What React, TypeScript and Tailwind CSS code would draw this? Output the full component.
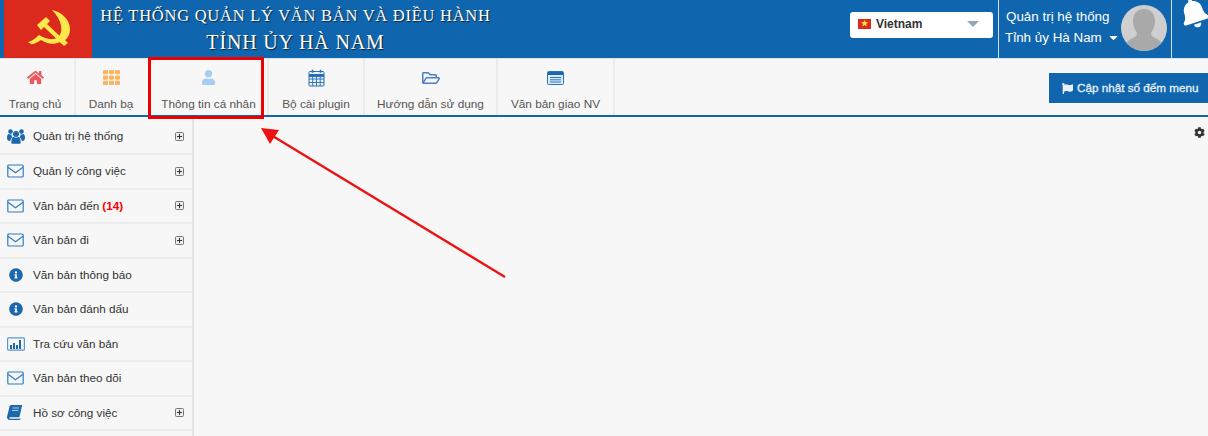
import { FaBell, FaCaretDown, FaCog, FaFlag, FaHome, FaInfoCircle, FaRegFolderOpen, FaTh, FaUser } from 'react-icons/fa';
import type { ReactNode } from 'react';

const Mail = () => (
  <svg width="17" height="14" viewBox="0 0 17 14" fill="none" stroke="#2f7cc4" strokeWidth="1.2">
    <rect x="0.8" y="1" width="15.4" height="12" rx="1" />
    <path d="M1 3.2 8.5 8.8 16 3.2" />
  </svg>
);

const Users = () => (
  <svg width="18" height="15" viewBox="0 0 18 15" fill="#1c68ad">
    <circle cx="9" cy="5" r="3" />
    <circle cx="3.5" cy="2.6" r="2.3" />
    <circle cx="14.5" cy="2.6" r="2.3" />
    <path d="M4.5 14.8c-.5-5 1-6.8 2.5-6.8 1 .9 3 .9 4 0 1.500 0 3 1.800 2.500 6.800z" />
    <path d="M0 9c0-2.500.8-4 2-4 .9.700 1.800.700 2.500.5-.1 1.200.3 2.200 1 3-1.200.6-2 1.700-2.200 3.500C1 12 0 11 0 9zM18 9c0-2.500-.8-4-2-4-.9.700-1.800.700-2.500.5.100 1.200-.3 2.200-1 3 1.200.6 2 1.700 2.200 3.500C17 12 18 11 18 9z" />
  </svg>
);

const Book = () => (
  <svg width="15" height="15" viewBox="0 0 15 15" fill="#1c68ad">
    <path d="M4 0h10.500c.5 0 .6.400.5.800l-2.400 10.700c-.1.400-.4.700-.8.700H3c-1 0-1 1.500 0 1.500h9.500l1.200-.6-.6 1.500-.6.400H2.500C.8 14.500-.3 13.200.1 11.500L2.600 1.200C2.800.400 3.300 0 4 0z" />
    <path d="M5.500 3h6.500M5 5.500h6.500" stroke="#dceaf7" strokeWidth="0.8" />
  </svg>
);

const Chart = () => (
  <svg width="18" height="14" viewBox="0 0 18 14">
    <rect x="0.6" y="0.8" width="16.8" height="12.4" rx="1" fill="none" stroke="#5a96d2" strokeWidth="1.2" />
    <path d="M3 8h2v4H3zM6 6h2v6H6zM9 8h2v4H9zM12 3h2v9h-2z" fill="#1c68ad" />
  </svg>
);

const Calendar = () => (
  <svg width="17" height="18" viewBox="0 0 17 18" fill="none" stroke="#2a6fb5">
    <rect x="1" y="2.5" width="15" height="14.5" rx="1" fill="#e8f0f8" />
    <path d="M1 6.500h15" strokeWidth="3" />
    <path d="M1 10h15M1 13.500h15M4.700 8v9M8.500 8v9M12.200 8v9" strokeWidth="0.9" />
    <path d="M4.500 0.800v3M12.500 0.800v3" strokeWidth="1.6" />
  </svg>
);

const Panel = () => (
  <svg width="17" height="14" viewBox="0 0 17 14">
    <rect x="0.5" y="0.5" width="16" height="13" rx="1" fill="#dceaf7" stroke="#2a76bd" />
    <path d="M1 1h15v3H1z" fill="#1c68ad" />
    <path d="M3 6.500h11M3 8.800h11M3 11h11" stroke="#2a76bd" strokeWidth="1" />
  </svg>
);

const Plus = () => (
  <svg width="9" height="9" viewBox="0 0 9 9" fill="none" strokeWidth="1">
    <rect x="0.5" y="0.5" width="8" height="8" rx="1" fill="#ececec" stroke="#777" />
    <path d="M2 4.500h5M4.500 2v5" stroke="#333" />
  </svg>
);

const tabs: { label: string; icon: ReactNode; box: string }[] = [
  { label: 'Trang chủ', icon: <FaHome size={17} color="#f0565e" />, box: 'w-[76px] pr-[4px]' },
  { label: 'Danh bạ', icon: <FaTh size={17} color="#fdb45c" />, box: 'w-[74px] pr-[2px]' },
  { label: 'Thông tin cá nhân', icon: <FaUser size={15} color="#a8cdf5" />, box: 'w-[119px]' },
  { label: 'Bộ cài plugin', icon: <Calendar />, box: 'w-[96px]' },
  { label: 'Hướng dẫn sử dụng', icon: <FaRegFolderOpen size={18} color="#4d7fc7" />, box: 'w-[133px]' },
  { label: 'Văn bản giao NV', icon: <Panel />, box: 'w-[117px]' },
];

const infoIcon = <FaInfoCircle size={14} color="#1c68ad" className="ml-[2px]" />;

const menu: { label: string; icon: ReactNode; count?: string; plus?: boolean }[] = [
  { label: 'Quản trị hệ thống', icon: <Users />, plus: true },
  { label: 'Quản lý công việc', icon: <Mail />, plus: true },
  { label: 'Văn bản đến', icon: <Mail />, count: '(14)', plus: true },
  { label: 'Văn bản đi', icon: <Mail />, plus: true },
  { label: 'Văn bản thông báo', icon: infoIcon },
  { label: 'Văn bản đánh dấu', icon: infoIcon },
  { label: 'Tra cứu văn bản', icon: <Chart /> },
  { label: 'Văn bản theo dõi', icon: <Mail /> },
  { label: 'Hồ sơ công việc', icon: <Book />, plus: true },
];

export default function App() {
  return (
    <div className="relative h-[436px] w-[1208px] overflow-hidden bg-[#f7f7f7] font-['Liberation_Sans',Arial,sans-serif] text-[12px] text-[#333]">
      {/* Header */}
      <header className="flex h-[58px] bg-[#1066ae]">
        <div className="ml-1 h-[58px] w-[88px] bg-[#dc291e]">
          <svg width="88" height="58" viewBox="4 0 88 58" fill="#fde84c">
            <path d="M52 10C62 12 70 20 70 29C70 34 68 38 65 40L68 43L64 46L60 42C54 45 47 44 41 40C38 42 33 45 31 44L28 42C32 41 36 38 39 35C46 39 53 41 58 37C64 32 62 20 52 10Z" />
            <path d="M37 25L46 17L50 21L47 24L65 41L62 44L44 27L41 30Z" />
          </svg>
        </div>
        <div className="ml-2 w-[391px] pt-[6px] text-center font-['Liberation_Serif',serif] text-white [text-shadow:1px_1px_1px_#123]">
          <div className="text-[16.5px] leading-[20px] tracking-[0.74px] whitespace-nowrap">HỆ THỐNG QUẢN LÝ VĂN BẢN VÀ ĐIỀU HÀNH</div>
          <div className="mt-[5px] text-[20px] leading-[22px] tracking-[0.85px] whitespace-nowrap">TỈNH ỦY HÀ NAM</div>
        </div>
        <div className="ml-[359px] mt-[12px] flex h-[26px] w-[143px] items-center rounded-[3px] bg-white pb-[2px] pl-[8px] pr-[14px] text-[12px] font-bold text-[#333]">
          <span className="flex h-[10px] w-[13px] items-center justify-center bg-[#da2a1c] text-[8px] leading-none text-[#fde84c]">★</span>
          <span className="ml-[5px] flex-1">Vietnam</span>
          <span className="h-0 w-0 border-x-[6px] border-t-[6px] border-x-transparent border-t-[#8fa8bd]" />
        </div>
        <div className="ml-[5px] flex w-[174px] border-x border-[#cfe0ef] pl-[7px]">
          <div className="w-[115px] pt-[6px] text-[13.4px] leading-[21px] text-white">
            <div>Quản trị hệ thống</div>
            <div className="-ml-[1px] flex items-center">Tỉnh ủy Hà Nam<FaCaretDown size={13} className="ml-[5px]" /></div>
          </div>
          <div className="mt-[5px] h-[46px] w-[46px] overflow-hidden rounded-full bg-[#cfcfcf]">
            <svg width="46" height="46" viewBox="0 0 46 46" fill="#a9a9a9">
              <path d="M23 4c7 0 11 5 11 12 0 5-2 9-4 12 0 3 2 4 6 6 2 1 4 3 5 5v7H5v-7c1-2 3-4 5-5 4-2 6-3 6-6-2-3-4-7-4-12 0-7 4-12 11-12z" />
            </svg>
          </div>
        </div>
        <div className="flex-1 overflow-hidden pl-[7px]">
          <FaBell size={30} color="#fff" className="-mt-[2px] rotate-[-18deg]" />
        </div>
      </header>

      {/* Tab bar */}
      <nav className="flex h-[59px] items-start justify-between border-t border-[#d8e4ee] border-b-2 border-b-[#1066ae]">
        <div className="flex h-[56px]">
          {tabs.map(tab => (
            <div key={tab.label} className={`${tab.box} flex h-full flex-col items-center border-r-2 border-[#ececec] text-[11.8px] text-[#555]`}>
              <div className="flex h-[34px] items-center pt-[3px]">{tab.icon}</div>
              <div className="mt-[4px] whitespace-nowrap leading-[14px]">{tab.label}</div>
            </div>
          ))}
        </div>
        <div className="mt-[14px] flex h-[30px] w-[159px] items-center bg-[#1066ae] pl-[13px] text-[11.7px] text-[#eaf2f9] [-webkit-text-stroke:0.3px_#eaf2f9]">
          <FaFlag size={11} className="mr-[4px]" />
          <span>Cập nhật số đếm menu</span>
        </div>
      </nav>

      {/* Body */}
      <div className="relative flex">
        <aside className="h-[319px] w-[194px] border-r-2 border-[#e5e5e5] pt-[2px]">
          {menu.map(item => (
            <div key={item.label} className="flex h-[34.5px] items-center border-b-2 border-[#ececec] pl-[7px] pr-[8px] first:h-[36px]">
              <span className="flex w-[26px] shrink-0 justify-start">{item.icon}</span>
              <span className="flex-1 text-[11.7px] text-[#333]">
                {item.label}
                {item.count && <b className="ml-[3px] text-[#f00]">{item.count}</b>}
              </span>
              {item.plus && <Plus />}
            </div>
          ))}
        </aside>
        <main className="flex flex-1 justify-end pr-[3px] pt-[10px]">
          <FaCog size={11} color="#333" />
        </main>
      </div>

      {/* Annotation drawn over the page */}
      <div className="absolute left-[148px] top-[57px] h-[62px] w-[116px] border-[3px] border-[#ee0000]" />
      <svg className="absolute left-[255px] top-[122px]" width="256" height="160" viewBox="0 0 256 160">
        <path d="M250 155 16 13" stroke="#ee1111" strokeWidth="2.4" fill="none" />
        <path d="M6 6 24 8 15 22z" fill="#ee1111" />
      </svg>
    </div>
  );
}
